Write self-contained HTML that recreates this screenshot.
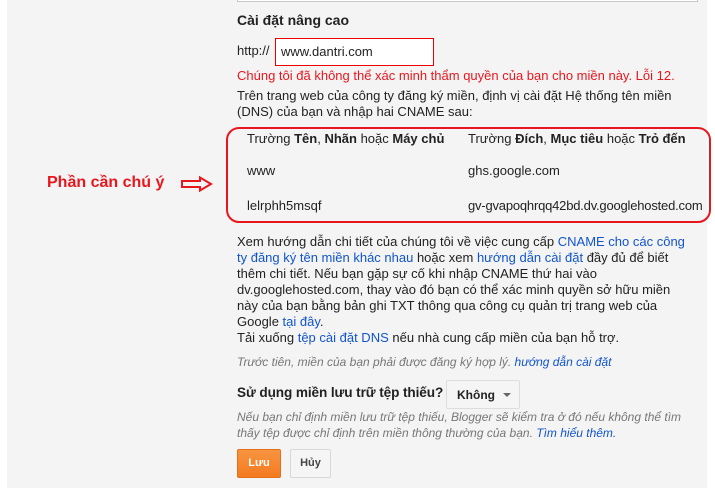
<!DOCTYPE html>
<html><head><meta charset="utf-8"><style>
body{margin:0;width:715px;height:492px;background:#fff;position:relative;overflow:hidden;font-family:"Liberation Sans",Arial,sans-serif;font-size:13px;color:#222}
.bg{position:absolute;left:7px;top:0;width:700px;height:488px;background:#f4f4f4}
.a{position:absolute;white-space:nowrap}
a{color:#15c;text-decoration:none}
.i{font-style:italic;color:#777}
</style></head><body>
<div class="bg"></div>
<div class="a" style="left:237px;top:-2px;width:459px;height:3px;border:1px solid #c8c8c8;border-top:0;background:#fff"></div>
<div class="a" style="left:237px;top:12px;font-size:14px;font-weight:bold">Cài đặt nâng cao</div>
<div class="a" style="left:237px;top:43px">http://</div>
<div class="a" style="left:275px;top:38px;width:157px;height:26px;border:1px solid #e00;background:#fff;box-sizing:content-box"><span style="position:absolute;left:5px;top:5px;font-size:13px">www.dantri.com</span></div>
<div class="a" style="left:237px;top:68px;color:#e8171e">Chúng tôi đã không thể xác minh thẩm quyền của bạn cho miền này. Lỗi 12.</div>
<div class="a" style="left:237px;top:88px;line-height:16px">Trên trang web của công ty đăng ký miền, định vị cài đặt Hệ thống tên miền<br>(DNS) của bạn và nhập hai CNAME sau:</div>
<div class="a" style="left:226px;top:127px;width:481px;height:92px;border:2px solid #e8171e;border-radius:13px"></div>
<div class="a" style="left:247px;top:131px">Trường <b>Tên</b>, <b>Nhãn</b> hoặc <b>Máy chủ</b></div>
<div class="a" style="left:468px;top:131px">Trường <b>Đích</b>, <b>Mục tiêu</b> hoặc <b>Trỏ đến</b></div>
<div class="a" style="left:247px;top:163px">www</div>
<div class="a" style="left:468px;top:163px">ghs.google.com</div>
<div class="a" style="left:247px;top:198px">lelrphh5msqf</div>
<div class="a" style="left:468px;top:198px;letter-spacing:-0.2px">gv-gvapoqhrqq42bd.dv.googlehosted.com</div>
<div class="a" style="left:47px;top:174px;font-size:16px;font-weight:bold;color:#e8171e">Phần cần chú ý</div>
<svg class="a" style="left:180px;top:176px" width="34" height="16"><path d="M2 5H20V1.5L31 8L20 14.5V11H2Z" fill="none" stroke="#e8171e" stroke-width="2"/></svg>
<div class="a" style="left:237px;top:234px;line-height:16px">Xem hướng dẫn chi tiết của chúng tôi về việc cung cấp <a>CNAME cho các công</a><br><a>ty đăng ký tên miền khác nhau</a> hoặc xem <a>hướng dẫn cài đặt</a> đầy đủ để biết<br>thêm chi tiết. Nếu bạn gặp sự cố khi nhập CNAME thứ hai vào<br>dv.googlehosted.com, thay vào đó bạn có thể xác minh quyền sở hữu miền<br>này của bạn bằng bản ghi TXT thông qua công cụ quản trị trang web của<br>Google <a>tại đây</a>.<br>Tải xuống <a>tệp cài đặt DNS</a> nếu nhà cung cấp miền của bạn hỗ trợ.</div>
<div class="a i" style="left:237px;top:355px;font-size:12px">Trước tiên, miền của bạn phải được đăng ký hợp lý. <a>hướng dẫn cài đặt</a></div>
<div class="a" style="left:237px;top:385px;font-size:13.6px;font-weight:bold;letter-spacing:-0.1px">Sử dụng miền lưu trữ tệp thiếu?</div>
<div class="a" style="left:446px;top:380px;width:72px;height:27px;border:1px solid #ddd;background:#f5f5f5;border-radius:2px"><span style="position:absolute;left:10px;top:7px;font-size:12px;font-weight:bold">Không</span><span style="position:absolute;left:56px;top:12px;border:4px solid transparent;border-top:4px solid #666;border-bottom:0"></span></div>
<div class="a i" style="left:237px;top:409px;font-size:12px;line-height:16px">Nếu bạn chỉ định miền lưu trữ tệp thiếu, Blogger sẽ kiểm tra ở đó nếu không thể tìm<br>thấy tệp được chỉ định trên miền thông thường của bạn. <a>Tìm hiểu thêm.</a></div>
<div class="a" style="left:237px;top:449px;width:44px;height:29px;background:linear-gradient(#f89440,#f47a20);border:1px solid #e5701c;border-radius:2px;box-sizing:border-box;color:#fff;font-weight:bold;font-size:11px;text-align:center;line-height:27px">Lưu</div>
<div class="a" style="left:290px;top:449px;width:41px;height:29px;background:#f5f5f5;border:1px solid #d8d8d8;border-radius:2px;box-sizing:border-box;font-weight:bold;font-size:11px;text-align:center;line-height:27px;color:#444">Hủy</div>
</body></html>
